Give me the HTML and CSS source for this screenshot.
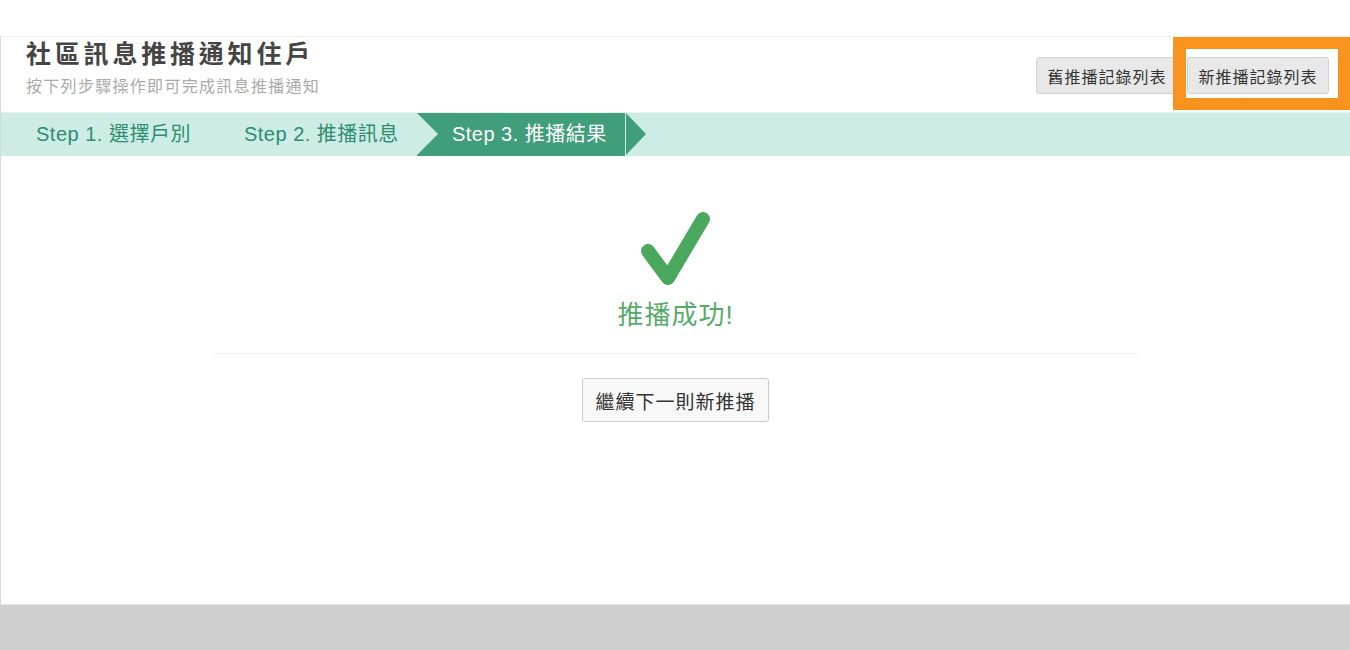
FILE: index.html
```html
<!DOCTYPE html>
<html lang="zh-Hant">
<head>
    <meta charset="UTF-8">
    <meta name="viewport" content="width=device-width, initial-scale=1.0">
    <title>社區訊息推播通知住戶</title>
    <link rel="stylesheet" href="styles.css">
</head>
<body>
    <div class="page">
        <div class="panel">
            <div class="header">
                <div class="titles">
                    <h1>社區訊息推播通知住戶</h1>
                    <p class="subtitle">按下列步驟操作即可完成訊息推播通知</p>
                </div>
                <div class="actions">
                    <button class="btn">舊推播記錄列表</button>
                    <button class="btn">新推播記錄列表</button>
                </div>
                <div class="highlight"></div>
            </div>

            <ul class="steps">
                <li>Step 1. 選擇戶別</li>
                <li>Step 2. 推播訊息</li>
                <li class="active">Step 3. 推播結果</li>
            </ul>

            <div class="result">
                <svg class="check" width="80" height="80" viewBox="0 0 80 80">
                    <polyline points="12,44 32,71 67,12" fill="none" stroke="#4aa75e" stroke-width="14" stroke-linecap="round" stroke-linejoin="round"/>
                </svg>
                <div class="message">推播成功!</div>
                <hr class="divider">
                <button class="btn btn-next">繼續下一則新推播</button>
            </div>
        </div>
        <div class="footer"></div>
    </div>
</body>
</html>
```

FILE: styles.css
```css
body {
    margin: 0;
    padding: 0;
    background: #fff;
    font-family: "Liberation Sans", "Noto Sans CJK TC", sans-serif;
    overflow: hidden;
}

.page {
    padding-top: 36px;
}

.panel {
    height: 567px;
    border-left: 1px solid #d9d9d9;
    border-top: 1px solid #f3f3f3;
}

.header {
    position: relative;
    height: 75px;
    display: flex;
    justify-content: space-between;
    padding: 0 21px 0 25px;
}

.titles h1 {
    margin: 2px 0 0;
    font-size: 25px;
    line-height: 30px;
    font-weight: bold;
    letter-spacing: 3.8px;
    color: #454545;
}

.subtitle {
    margin: 8px 0 0;
    font-size: 16px;
    line-height: 20px;
    letter-spacing: 1.3px;
    color: #aaa;
}

.actions {
    display: flex;
    gap: 9px;
    margin-top: 20px;
    align-self: flex-start;
}

.btn {
    font-family: "Liberation Sans", "Noto Sans CJK TC", sans-serif;
    font-size: 16px;
    letter-spacing: 1px;
    color: #333;
    background: #e8e8e8;
    border: 1px solid #d2d2d2;
    border-radius: 3px;
    height: 37px;
    width: 142px;
    padding: 0;
    cursor: pointer;
}

/* orange annotation box around the new list button */
.highlight {
    position: absolute;
    top: 0;
    right: 0;
    width: 152px;
    height: 49px;
    border: 12px solid #f7931e;
    border-left-width: 13px;
    border-right-width: 12px;
}

.steps {
    display: flex;
    margin: 0;
    padding: 0;
    list-style: none;
    height: 43px;
    background: #cdece6;
    border-top: 1px solid #e6f5f1;
}

.steps li {
    position: relative;
    padding: 0 18px 0 35px;
    line-height: 43px;
    font-size: 20px;
    letter-spacing: 0.5px;
    color: #2e8c70;
    white-space: nowrap;
}

.steps li.active {
    background: #409e7b;
    color: #fff;
}

.steps li.active::before {
    content: "";
    position: absolute;
    left: 0;
    top: 0;
    border-left: 21px solid #cdece6;
    border-top: 21.5px solid transparent;
    border-bottom: 21.5px solid transparent;
}

.steps li.active::after {
    content: "";
    position: absolute;
    left: calc(100% + 1px);
    top: 0;
    border-left: 20px solid #409e7b;
    border-top: 21.5px solid transparent;
    border-bottom: 21.5px solid transparent;
}

.result {
    display: flex;
    flex-direction: column;
    align-items: center;
    padding-top: 51px;
}

.check {
    display: block;
}

.message {
    margin-top: 10px;
    font-size: 26px;
    line-height: 36px;
    letter-spacing: 1px;
    color: #55ab68;
}

.divider {
    width: 924px;
    border: 0;
    border-top: 1px solid #eee;
    margin: 20px 0 24px;
}

.btn-next {
    width: 187px;
    height: 44px;
    font-size: 19px;
    background: #f8f8f8;
    border-color: #ccc;
}

.footer {
    height: 45px;
    background: #cecece;
    border-top: 1px solid #e4e4e4;
}
```
